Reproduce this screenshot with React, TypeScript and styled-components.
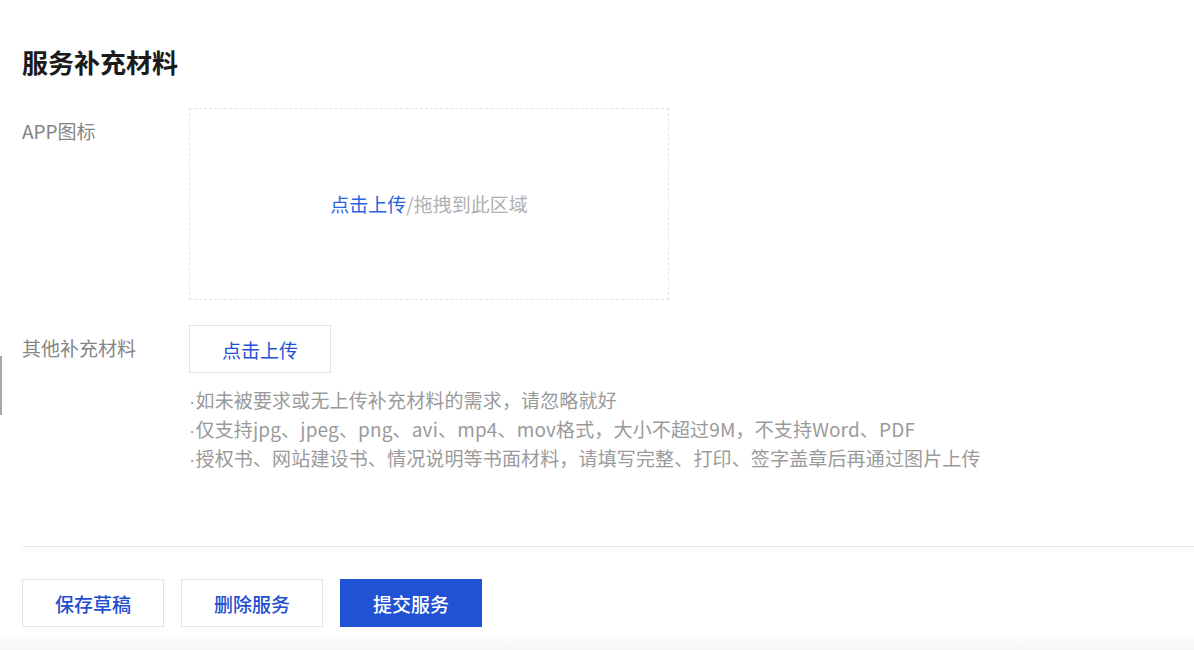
import styled, { createGlobalStyle } from 'styled-components';

const GlobalStyle = createGlobalStyle`
  html, body {
    margin: 0;
    padding: 0;
    background: #fff;
    font-family: "Noto Sans CJK SC", "Noto Sans", sans-serif;
  }
`;

const hints = [
  '如未被要求或无上传补充材料的需求，请忽略就好',
  '仅支持jpg、jpeg、png、avi、mp4、mov格式，大小不超过9M，不支持Word、PDF',
  '授权书、网站建设书、情况说明等书面材料，请填写完整、打印、签字盖章后再通过图片上传',
];

const App = () => {
  return (
    <>
      <GlobalStyle />
      <Page>
        <EdgeBar />
        <Title>服务补充材料</Title>

        <FormRow>
          <Label>APP图标</Label>
          <DropZone>
            <LinkText>点击上传</LinkText>
            <MutedText>/拖拽到此区域</MutedText>
          </DropZone>
        </FormRow>

        <FormRow>
          <Label>其他补充材料</Label>
          <Field>
            <UploadButton>点击上传</UploadButton>
            <HintList>
              {hints.map((h) => (
                <Hint key={h}>
                  <Dot>·</Dot>
                  {h}
                </Hint>
              ))}
            </HintList>
          </Field>
        </FormRow>

        <Divider />

        <Actions>
          <ActionButton>保存草稿</ActionButton>
          <ActionButton>删除服务</ActionButton>
          <ActionButton primary>提交服务</ActionButton>
        </Actions>
        <BottomFade />
      </Page>
    </>
  );
};

const Page = styled.div`
  position: relative;
  width: 1194px;
  height: 650px;
  box-sizing: border-box;
  padding: 44px 0 0 22px;
  overflow: hidden;
`;

const EdgeBar = styled.div`
  position: absolute;
  left: 0;
  top: 356px;
  width: 2px;
  height: 59px;
  background: #a8a8a8;
`;

const Title = styled.h2`
  margin: 0 0 28px;
  font-size: 26px;
  line-height: 36px;
  font-weight: 700;
  color: #1b1b1b;
`;

const FormRow = styled.div`
  display: flex;
  align-items: flex-start;
  margin-bottom: 25px;
`;

const Label = styled.div`
  width: 167px;
  flex-shrink: 0;
  font-size: 19px;
  line-height: 46px;
  color: #858585;
`;

const DropZone = styled.div`
  width: 480px;
  height: 192px;
  box-sizing: border-box;
  border: 1px dashed #e2e4e8;
  display: flex;
  align-items: center;
  justify-content: center;
  font-size: 19px;
  padding-bottom: 2px;
`;

const LinkText = styled.span`
  color: #2a64e0;
`;

const MutedText = styled.span`
  color: #b0b0b0;
`;

const Field = styled.div`
  display: flex;
  flex-direction: column;
`;

const UploadButton = styled.button`
  width: 142px;
  height: 48px;
  box-sizing: border-box;
  border: 1px solid #e0e3ea;
  background: #fff;
  color: #1f52d2;
  font-family: inherit;
  font-size: 19px;
  padding: 0;
  cursor: pointer;
`;

const HintList = styled.div`
  margin-top: 12px;
  display: flex;
  flex-direction: column;
`;

const Hint = styled.div`
  height: 29px;
  font-size: 19px;
  line-height: 29px;
  color: #9a9a9a;
  white-space: nowrap;
  letter-spacing: 0.15px;
`;

const Dot = styled.span`
  font-family: "Liberation Sans", Arial, sans-serif;
  line-height: 1;
`;

const Divider = styled.div`
  margin-top: 74px;
  height: 1px;
  background: #e9e9ec;
`;

const Actions = styled.div`
  display: flex;
  gap: 17px;
  margin-top: 32px;
`;

const ActionButton = styled.button<{ primary?: boolean }>`
  width: 142px;
  height: 48px;
  box-sizing: border-box;
  padding: 0;
  font-family: inherit;
  font-size: 19px;
  font-weight: 500;
  cursor: pointer;
  border: 1px solid ${(p) => (p.primary ? '#2152d4' : '#e0e3ea')};
  background: ${(p) => (p.primary ? '#2152d4' : '#fff')};
  color: ${(p) => (p.primary ? '#fff' : '#1f4fcf')};
`;

const BottomFade = styled.div`
  position: absolute;
  left: 0;
  right: 0;
  bottom: 0;
  height: 20px;
  background: linear-gradient(to bottom, rgba(250, 250, 250, 0), rgba(247, 247, 247, 1));
  pointer-events: none;
`;

export default App;
